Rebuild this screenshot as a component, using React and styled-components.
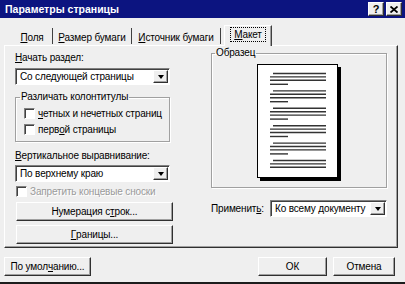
import React from 'react';
import styled, { createGlobalStyle, css } from 'styled-components';

const GlobalStyle = createGlobalStyle`
  html, body {
    margin: 0;
    padding: 0;
    background: #efefef;
  }
  body {
    font-family: "Liberation Sans", Arial, sans-serif;
    font-size: 10px;
    letter-spacing: -0.15px;
    color: #000;
  }
`;

const raised = css`
  border: 1px solid;
  border-color: #fff #303030 #303030 #fff;
  box-shadow: inset -1px -1px #a0a0a0;
`;

const sunken = css`
  border: 1px solid;
  border-color: #808080 #fff #fff #808080;
  box-shadow: inset 1px 1px #404040;
`;

const Window = styled.div`
  width: 405px;
  height: 284px;
  box-sizing: border-box;
  background: #efefef;
  border-bottom: 2px solid #1c1c1c;
  display: flex;
  flex-direction: column;
  overflow: hidden;
`;

const TitleBar = styled.div`
  height: 18px;
  flex: none;
  background: #0c1480;
  display: flex;
  align-items: center;
  justify-content: space-between;
  padding: 0 3px 0 5px;
`;

const Title = styled.span`
  color: #fff;
  font-weight: bold;
  font-size: 10.5px;
  letter-spacing: 0;
`;

const Caps = styled.div`
  display: flex;
  gap: 2px;
`;

const CapButton = styled.div`
  width: 16px;
  height: 14px;
  box-sizing: border-box;
  background: #efefef;
  ${raised};
  display: flex;
  align-items: center;
  justify-content: center;
  font-weight: bold;
  font-size: 11px;
  line-height: 1;
`;

const Body = styled.div`
  display: flex;
  flex-direction: column;
  padding: 7px 7px 0 4px;
`;

const TabStrip = styled.div`
  height: 20px;
  display: flex;
  align-items: flex-end;
  padding-left: 8px;
  position: relative;
  z-index: 1;
`;

const Tab = styled.div`
  width: ${p => p.$w}px;
  box-sizing: border-box;
  height: 16px;
  margin-bottom: 1px;
  padding-top: 2px;
  display: flex;
  align-items: center;
  justify-content: center;
  border-right: 1px solid #404040;
  ${p => p.$active && css`
    height: 21px;
    margin: 0 0 -1px 3px;
    padding: 0 0 3px;
    border-top: 1px solid #fff;
    border-left: 1px solid #fff;
    box-shadow: inset -1px 0 #a0a0a0;
    background: #efefef;
  `}
`;

const Focus = styled.span`
  border: 1px dotted #000;
  padding: 1px 3px;
  line-height: 11px;
`;

const Key = styled.span`
  text-decoration: underline;
`;

const Panel = styled.div`
  height: 203px;
  box-sizing: border-box;
  ${raised};
  display: flex;
  justify-content: space-between;
  padding: 0 10px;
`;

const Column = styled.div`
  width: ${p => p.$w}px;
  display: flex;
  flex-direction: column;
  padding-top: ${p => p.$top || 0}px;
`;

const Label = styled.div`
  line-height: 12px;
  margin-top: ${p => p.$mt || 0}px;
  white-space: nowrap;
`;

const Select = styled.div`
  width: ${p => p.$w}px;
  height: 17px;
  box-sizing: border-box;
  margin-top: ${p => p.$mt || 0}px;
  background: #fff;
  ${sunken};
  display: flex;
  align-items: center;
  justify-content: space-between;
  padding: 2px 2px 2px 4px;
  white-space: nowrap;
`;

const ArrowButton = styled.div`
  width: 15px;
  height: 13px;
  box-sizing: border-box;
  background: #efefef;
  ${raised};
  display: flex;
  align-items: center;
  justify-content: center;
  margin-right: -1px;
  &::after {
    content: '';
    border-left: 3.5px solid transparent;
    border-right: 3.5px solid transparent;
    border-top: 4px solid #000;
    margin-top: 1px;
  }
`;

const Group = styled.fieldset`
  width: ${p => p.$w}px;
  box-sizing: border-box;
  margin: ${p => p.$mt || 0}px 0 0;
  padding: 2px 8px 4px;
  border: 1px solid #a0a0a0;
  box-shadow: 1px 1px #fff, inset 1px 1px #fff;
  min-width: 0;
`;

const Legend = styled.legend`
  padding: 0 1px;
  margin-left: ${p => p.$ml || 0}px;
  line-height: 12px;
`;

const CheckRow = styled.div`
  height: ${p => p.$h || 16}px;
  display: flex;
  align-items: center;
  gap: 3px;
  margin-top: ${p => p.$mt || 0}px;
  padding-left: ${p => p.$pl || 0}px;
  color: ${p => (p.$disabled ? '#9a9a9a' : '#000')};
  text-shadow: ${p => (p.$disabled ? '1px 1px #fff' : 'none')};
  white-space: nowrap;
`;

const Box = styled.span`
  width: 11px;
  height: 11px;
  box-sizing: border-box;
  flex: none;
  background: #fff;
  ${sunken};
`;

const Button = styled.div`
  width: ${p => p.$w}px;
  height: 19px;
  box-sizing: border-box;
  margin-top: ${p => p.$mt || 0}px;
  margin-left: ${p => p.$ml || 0}px;
  background: #efefef;
  ${raised};
  display: flex;
  align-items: center;
  justify-content: center;
  white-space: nowrap;
`;

const Preview = styled.div`
  display: flex;
  justify-content: center;
  padding: 3px 0 1px;
`;

const ApplyRow = styled.div`
  display: flex;
  align-items: center;
  justify-content: space-between;
  margin-top: 12px;
`;

const Footer = styled.div`
  display: flex;
  justify-content: space-between;
  margin-top: 9px;
`;

const FooterRight = styled.div`
  display: flex;
  gap: 6px;
  margin-right: 3px;
`;

const paragraphs = [0, 1, 2, 3, 4, 5];

function PagePreview() {
  return (
    <svg width="85" height="118" viewBox="0 0 85 118">
      <rect x="3" y="3" width="81" height="114" fill="#000" />
      <rect x="0.5" y="0.5" width="80" height="113" fill="#fff" stroke="#000" />
      {paragraphs.map(i => {
        const y = 9.5 + i * 17.4;
        return (
          <g key={i} stroke="#333" strokeWidth="1.4">
            <line x1="16" x2="69" y1={y} y2={y} />
            <line x1="13" x2="69" y1={y + 3.4} y2={y + 3.4} />
            <line x1="13" x2="69" y1={y + 6.8} y2={y + 6.8} />
            {i < 5 && <line x1="13" x2="31" y1={y + 10.8} y2={y + 10.8} />}
          </g>
        );
      })}
    </svg>
  );
}

export default function App() {
  return (
    <>
      <GlobalStyle />
      <Window>
        <TitleBar>
          <Title>Параметры страницы</Title>
          <Caps>
            <CapButton>?</CapButton>
            <CapButton>
              <svg width="8" height="7" viewBox="0 0 8 7">
                <path d="M0.5 0.5 L7.5 6.5 M7.5 0.5 L0.5 6.5" stroke="#000" strokeWidth="1.8" />
              </svg>
            </CapButton>
          </Caps>
        </TitleBar>
        <Body>
          <TabStrip>
            <Tab $w={41}><span><Key>П</Key>оля</span></Tab>
            <Tab $w={79}><span><Key>Р</Key>азмер бумаги</span></Tab>
            <Tab $w={89}><span><Key>И</Key>сточник бумаги</span></Tab>
            <Tab $w={48} $active><Focus><Key>М</Key>акет</Focus></Tab>
          </TabStrip>
          <Panel>
            <Column $w={158} $top={6}>
              <Label><Key>Н</Key>ачать раздел:</Label>
              <Select $w={155} $mt={4}>
                <span>Со следующей страницы</span>
                <ArrowButton />
              </Select>
              <Group $w={155} $mt={6}>
                <Legend $ml={-4}>Различать колонтитулы</Legend>
                <CheckRow>
                  <Box />
                  <span><Key>ч</Key>етных и нечетных страниц</span>
                </CheckRow>
                <CheckRow>
                  <Box />
                  <span>перв<Key>о</Key>й страницы</span>
                </CheckRow>
              </Group>
              <Label $mt={8}><Key>В</Key>ертикальное выравнивание:</Label>
              <Select $w={155} $mt={3}>
                <span>По верхнему краю</span>
                <ArrowButton />
              </Select>
              <CheckRow $h={12} $mt={3} $pl={1} $disabled>
                <Box />
                <span>Запретить концевые сноски</span>
              </CheckRow>
              <Button $w={157} $mt={5} $ml={1}>Нумерация с<Key>т</Key>рок...</Button>
              <Button $w={157} $mt={4} $ml={1}><Key>Г</Key>раницы...</Button>
            </Column>
            <Column $w={176} $top={1}>
              <Group $w={176}>
                <Legend $ml={-5}>Образец</Legend>
                <Preview>
                  <PagePreview />
                </Preview>
              </Group>
              <ApplyRow>
                <Label>Применит<Key>ь</Key>:</Label>
                <Select $w={117}>
                  <span>Ко всему документу</span>
                  <ArrowButton />
                </Select>
              </ApplyRow>
            </Column>
          </Panel>
          <Footer>
            <Button $w={87}>По умол<Key>ч</Key>анию...</Button>
            <FooterRight>
              <Button $w={69}>ОК</Button>
              <Button $w={62}>Отмена</Button>
            </FooterRight>
          </Footer>
        </Body>
      </Window>
    </>
  );
}
